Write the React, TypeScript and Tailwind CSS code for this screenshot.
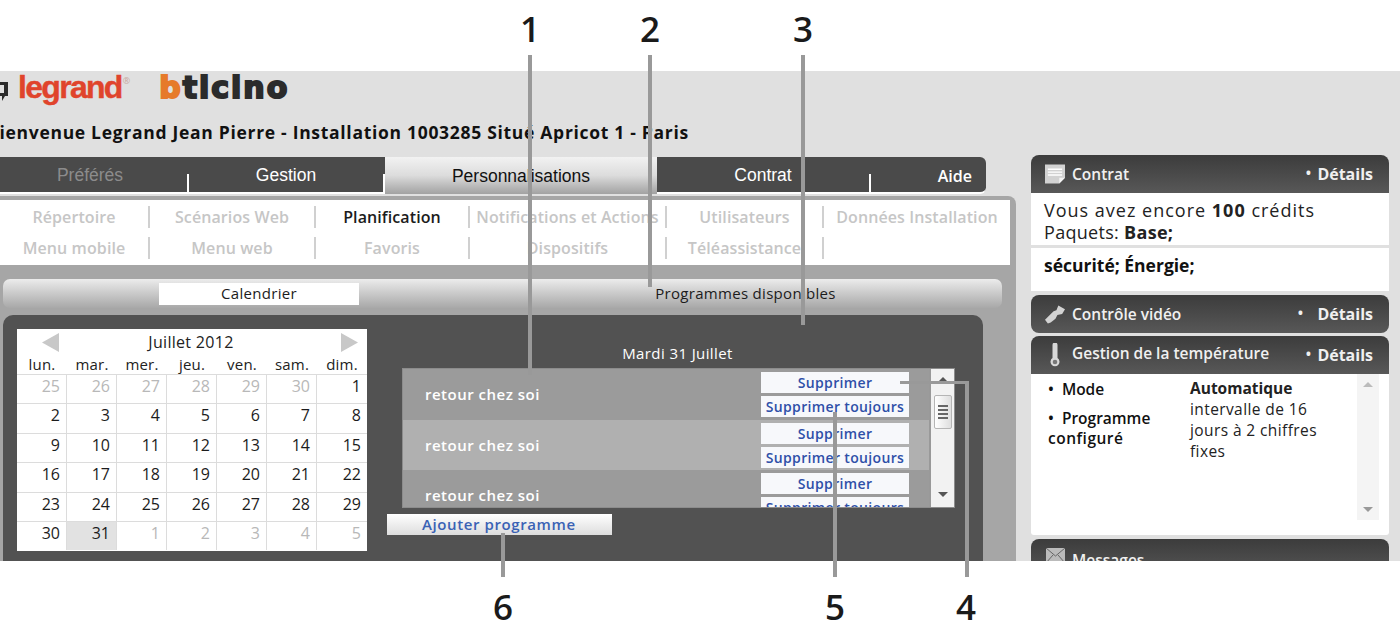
import React from 'react';

const subNav = [
  ['Répertoire', 'Scénarios Web', 'Planification', 'Notifications et Actions', 'Utilisateurs', 'Données Installation'],
  ['Menu mobile', 'Menu web', 'Favoris', 'Dispositifs', 'Téléassistance', ''],
];

const weeks = [
  [25, 26, 27, 28, 29, 30, 1],
  [2, 3, 4, 5, 6, 7, 8],
  [9, 10, 11, 12, 13, 14, 15],
  [16, 17, 18, 19, 20, 21, 22],
  [23, 24, 25, 26, 27, 28, 29],
  [30, 31, 1, 2, 3, 4, 5],
];

const Callout = ({ className }: { className: string }) => <div className={`absolute bg-[#999999] ${className}`} />;

const Num = ({ n, className }: { n: number; className: string }) => (
  <div className={`absolute w-8 text-center text-[35px] leading-none font-semibold text-[#1a1a1a] ${className}`}>{n}</div>
);

const Tab = ({ label, className, textClass = 'text-white' }: { label: string; className: string; textClass?: string }) => (
  <div className={`flex items-center justify-center h-full pt-[2px] font-['Liberation_Sans',sans-serif] text-[17.5px] ${textClass} ${className}`}>
    {label}
  </div>
);

const PanelHead = ({ icon, title, details = true, dot = 'mr-[6px]', titleClass = 'mt-[1px]', className = '' }: { icon: React.ReactNode; title: string; details?: boolean; dot?: string; titleClass?: string; className?: string }) => (
  <div className={`flex items-center bg-gradient-to-b from-[#3c3c3c] to-[#585858] text-[#f0f0f0] text-[15.5px] font-semibold pl-[14px] pr-[16px] rounded-t-[8px] ${className}`}>
    <div className="w-[20px] flex justify-center mr-[7px]">{icon}</div>
    <span className={titleClass}>{title}</span>
    {details && <span className={`ml-auto ${dot}`}>•</span>}
    {details && <span className="text-[16px] font-bold">Détails</span>}
  </div>
);

const ProgramRow = ({ shade }: { shade: string }) => (
  <div className={`flex shrink-0 h-[50.5px] pt-[3px] ${shade}`}>
    <div className="w-[358px] pl-[22px] pt-[11px] text-white text-[15px] tracking-[0.5px] font-semibold">retour chez soi</div>
    <div className="flex flex-col gap-[3px] w-[148px] text-[14px] tracking-[0.35px] font-semibold text-[#2f4fa8] text-center leading-[21px]">
      <div className="h-[21px] bg-[#f7f8fb]">Supprimer</div>
      <div className="h-[21px] bg-[#f7f8fb] whitespace-nowrap">Supprimer toujours</div>
    </div>
  </div>
);

export default function App() {
  return (
    <div className="relative w-[1400px] h-[634px] overflow-hidden bg-white font-['Open_Sans',sans-serif]">
      <div className="h-[71px]" />
      <div className="flex h-[490px] overflow-hidden bg-[#e0e0e0]">
        <div className="w-[1031px] shrink-0 flex flex-col">
          <div className="flex items-center h-[36px] pt-[1px]">
            <svg width="8" height="21" viewBox="0 0 8 21" className="mt-[2px] shrink-0">
              <path d="M0 2h8v14H5l-3 5v-5H0z M0 5v8h4V5z" fill="#2b2b2b" fillRule="evenodd" />
            </svg>
            <span className="ml-[10px] -mt-[5px] font-['Liberation_Sans',sans-serif] font-bold text-[32px] tracking-[-1.7px] text-[#e0442c] leading-none [-webkit-text-stroke:0.4px_#e0442c]">legrand</span>
            <span className="self-start mt-[4px] ml-[1px] text-[9px] leading-none text-[#c9a79f]">®</span>
            <span className="ml-[29px] -mt-[3px] font-['DejaVu_Sans',sans-serif] font-bold text-[30px] leading-none tracking-[2px] text-[#2b2b2b] [-webkit-text-stroke:2px_#2b2b2b]">
              <span className="text-[#e67a2a] [-webkit-text-stroke:2px_#e67a2a]">b</span>ticino
            </span>
          </div>
          <div className="flex items-center h-[50px] -ml-[13px] text-[17.5px] tracking-[0.7px] font-bold text-[#111] whitespace-nowrap">
            Bienvenue Legrand Jean Pierre - Installation 1003285 Situé Apricot 1 - Paris
          </div>
          <div className="flex h-[37px] w-[986px]">
            <div className="flex h-full w-[385px] bg-[#4a4a4a] border-b-2 border-white">
              <Tab label="Préférés" textClass="text-[#8c8c8c]" className="w-[180px]" />
              <div className="w-[2px] h-[20px] mt-[17px] bg-white ml-[7px]" />
              <Tab label="Gestion" className="w-[194px]" />
              <div className="w-[2px] h-[20px] mt-[17px] bg-white" />
            </div>
            <Tab label="Personnalisations" textClass="text-[#111]" className="w-[272px] bg-gradient-to-b from-[#f2f2f2] via-[#dcdcdc] to-[#a2a2a2]" />
            <div className="flex h-full w-[329px] bg-[#4a4a4a] border-b-2 border-white rounded-tr-[6px] rounded-br-[6px]">
              <Tab label="Contrat" className="w-[212px]" />
              <div className="w-[2px] h-[20px] mt-[17px] bg-white" />
              <div className="flex-1 flex items-center justify-end pt-[3px] pr-[14px] text-white text-[16px] font-semibold">Aide</div>
            </div>
          </div>
          <div className="mt-[2px] flex-1 w-[1016px] bg-[#a6a6a6] rounded-tr-[8px] pt-[4px]">
            <div className="w-[1010px] h-[65px] bg-white pt-[6px] text-[16px] tracking-[0.1px] font-semibold text-[#c6c6c6]">
              {subNav.map((row, i) => (
                <div key={i} className="grid grid-cols-[150px_166px_154px_197px_157px_186px] h-[31px]">
                  {row.map((label, j) => (
                    <div key={j} className={`flex items-center justify-center h-[22px] whitespace-nowrap ${j < 5 ? 'border-r-2 border-[#d0d0d0]' : ''} ${label === 'Planification' ? 'text-[#1c1c1c]' : ''}`}>
                      {label}
                    </div>
                  ))}
                </div>
              ))}
            </div>
            <div className="ml-[3px] mt-[14px] w-[999px] h-[29px] rounded-[7px] bg-gradient-to-b from-[#ececec] to-[#a8a8a8] flex items-center text-[15px] tracking-[0.3px] font-medium text-[#1c1c1c]">
              <div className="ml-[156px] w-[200px] h-[22px] bg-white flex items-center justify-center">Calendrier</div>
              <div className="ml-[135px] w-[503px] text-center whitespace-nowrap">Programmes disponibles</div>
            </div>
            <div className="ml-[3px] mt-[7px] w-[980px] h-[246px] rounded-t-[10px] bg-[#525252] flex pt-[14px] pl-[14px]">
              <div className="w-[350px] h-[222px] bg-white text-[16px] text-[#222] shrink-0">
                <div className="flex items-center justify-between h-[26px] pl-[25px] pr-[9px]">
                  <svg width="17" height="19" viewBox="0 0 17 19"><path d="M17 0v19L0 9.5z" fill="#c8c8c8" /></svg>
                  <span className="text-[16px] tracking-[0.3px] font-medium mr-[18px]">Juillet 2012</span>
                  <svg width="17" height="19" viewBox="0 0 17 19"><path d="M0 0v19l17-9.5z" fill="#c8c8c8" /></svg>
                </div>
                <div className="grid grid-cols-7 h-[19px] leading-[18px] text-center text-[15px] tracking-[0.2px] font-medium">
                  {['lun.', 'mar.', 'mer.', 'jeu.', 'ven.', 'sam.', 'dim.'].map((d) => <div key={d}>{d}</div>)}
                </div>
                {weeks.map((week, w) => (
                  <div key={w} className="grid grid-cols-7 h-[29.4px] border-t border-[#dcdcdc]">
                    {week.map((d, i) => {
                      const outside = (w === 0 && d > 7) || (w === 5 && d < 7);
                      return (
                        <div key={i} className={`text-right pr-[6px] leading-[20px] pt-[1px] font-medium ${i < 6 ? 'border-r border-[#dcdcdc]' : ''} ${outside ? 'text-[#b8b8b8]' : 'text-[#1c1c1c]'} ${w === 5 && i === 1 ? 'bg-[#e2e2e2]' : ''}`}>
                          {d}
                        </div>
                      );
                    })}
                  </div>
                ))}
              </div>
              <div className="ml-[20px] w-[588px]">
                <div className="h-[39px] w-[553px] flex items-end justify-center pb-[4px] ml-[15px] pr-[2px] text-white text-[15px] tracking-[0.4px] font-medium">Mardi 31 Juillet</div>
                <div className="ml-[15px] w-[553px] h-[140px] flex bg-[#999999] border border-[#8c8c8c] overflow-hidden">
                  <div className="flex flex-col w-[526px]">
                    <ProgramRow shade="bg-[#9b9b9b]" />
                    <ProgramRow shade="bg-[#b0b0b0]" />
                    <ProgramRow shade="bg-[#9b9b9b]" />
                  </div>
                  <div className="flex-1 ml-[2px] bg-[#f2f2f2] relative flex flex-col items-center justify-between py-[8px]">
                    <svg width="10" height="5" viewBox="0 0 10 5"><path d="M5 0l5 5H0z" fill="#555" /></svg>
                    <div className="absolute top-[26px] left-[3px] w-[18px] h-[34px] rounded-[2px] border border-[#b5b5b5] bg-gradient-to-r from-white to-[#dedede] flex flex-col items-center justify-center gap-[2px]">
                      <div className="w-[10px] h-[2px] bg-[#666]" />
                      <div className="w-[10px] h-[2px] bg-[#666]" />
                      <div className="w-[10px] h-[2px] bg-[#666]" />
                      <div className="w-[10px] h-[2px] bg-[#666]" />
                    </div>
                    <svg width="10" height="5" viewBox="0 0 10 5" className="mb-[2px]"><path d="M0 0h10L5 5z" fill="#555" /></svg>
                  </div>
                </div>
                <div className="mt-[6px] w-[225px] h-[21px] bg-gradient-to-b from-white to-[#dddddd] pl-[35px] text-[15px] tracking-[0.6px] leading-[21px] font-semibold text-[#3a62b5]">Ajouter programme</div>
              </div>
            </div>
          </div>
        </div>
        <div className="w-[358px] shrink-0 pt-[84px] flex flex-col">
          <PanelHead
            title="Contrat"
            className="h-[38px] shrink-0"
            icon={
              <svg width="21" height="20" viewBox="0 0 21 20">
                <path d="M0 0h21v14l-6 6H0z" fill="#d2d2d2" />
                <path d="M3 5h15M3 8h15M3 11h15" stroke="#fff" strokeWidth="1.5" />
                <path d="M15 20v-6h6z" fill="#f5f5f5" />
              </svg>
            }
          />
          <div className="shrink-0 h-[52px] bg-white px-[13px] pt-[6px] text-[18px] leading-[22px] text-[#222]">
            <span className="tracking-[1px]">Vous avez encore <b>100</b> crédits</span><br />
            <span className="tracking-[0.3px]">Paquets: <b>Base;</b></span>
          </div>
          <div className="shrink-0 h-[43px] mt-[3px] bg-white px-[13px] pt-[6px] text-[17.5px] leading-[22px] font-bold text-[#111]">sécurité; Énergie;</div>
          <PanelHead
            title="Contrôle vidéo"
            dot="mr-[14px]"
            className="h-[38px] shrink-0 mt-[4px] rounded-b-[8px]"
            icon={
              <svg width="21" height="19" viewBox="0 0 21 19">
                <path d="M0 15l9-9 3-1 2-5 7 4-3 5-5 1-2 4-5 4-3 1z" fill="#d2d2d2" />
              </svg>
            }
          />
          <PanelHead
            title="Gestion de la température"
            titleClass="-mt-[3px]"
            className="h-[38px] shrink-0 mt-[3px]"
            icon={
              <svg width="10" height="24" viewBox="0 0 10 24">
                <path d="M2.5 15V2a2.5 2.5 0 015 0v13a4.5 4.5 0 11-5 0z" fill="#d8d8d8" />
                <circle cx="5" cy="19" r="2.3" fill="#777" />
              </svg>
            }
          />
          <div className="shrink-0 h-[161px] bg-white flex text-[15.5px] leading-[21px] text-[#222] rounded-b-[3px]">
            <div className="w-[148px] pl-[17px] pt-[5px] font-semibold text-[#111]">
              <div className="mb-[8px]">•&nbsp;&nbsp;Mode</div>
              <div className="leading-[20px]">•&nbsp;&nbsp;Programme<br /><span className="tracking-[0.5px]">configuré</span></div>
            </div>
            <div className="w-[178px] pl-[11px] pt-[4px] tracking-[0.4px]">
              <b className="font-bold tracking-normal">Automatique</b><br />intervalle de 16<br />jours à 2 chiffres<br />fixes
            </div>
            <div className="w-[22px] h-[146px] bg-[#f4f4f4] flex flex-col items-center justify-between py-[8px]">
              <svg width="10" height="5" viewBox="0 0 10 5"><path d="M5 0l5 5H0z" fill="#bbb" /></svg>
              <svg width="10" height="5" viewBox="0 0 10 5"><path d="M0 0h10L5 5z" fill="#999" /></svg>
            </div>
          </div>
          <PanelHead
            title="Messages"
            details={false}
            className="h-[38px] shrink-0 mt-[4px] items-start pt-[9px]"
            icon={
              <svg width="19" height="15" viewBox="0 0 19 15">
                <rect width="19" height="15" fill="#bbb" />
                <path d="M0 0l9.5 8L19 0M0 15l7-8M19 15l-7-8" stroke="#666" fill="none" />
              </svg>
            }
          />
        </div>
      </div>

      {/* numbered callouts drawn over the screenshot */}
      <Callout className="left-[528px] top-[55px] w-[4px] h-[320px]" />
      <Callout className="left-[648px] top-[55px] w-[4px] h-[232px]" />
      <Callout className="left-[801px] top-[55px] w-[4px] h-[270px]" />
      <Callout className="left-[900px] top-[381px] w-[68px] h-[3px]" />
      <Callout className="left-[965px] top-[381px] w-[4px] h-[196px]" />
      <Callout className="left-[833px] top-[412px] w-[4px] h-[165px]" />
      <Callout className="left-[501px] top-[533px] w-[4px] h-[44px]" />
      <Num n={1} className="left-[514px] top-[11px]" />
      <Num n={2} className="left-[634px] top-[11px]" />
      <Num n={3} className="left-[787px] top-[11px]" />
      <Num n={4} className="left-[950px] top-[589px]" />
      <Num n={5} className="left-[819px] top-[589px]" />
      <Num n={6} className="left-[487px] top-[589px]" />
    </div>
  );
}
